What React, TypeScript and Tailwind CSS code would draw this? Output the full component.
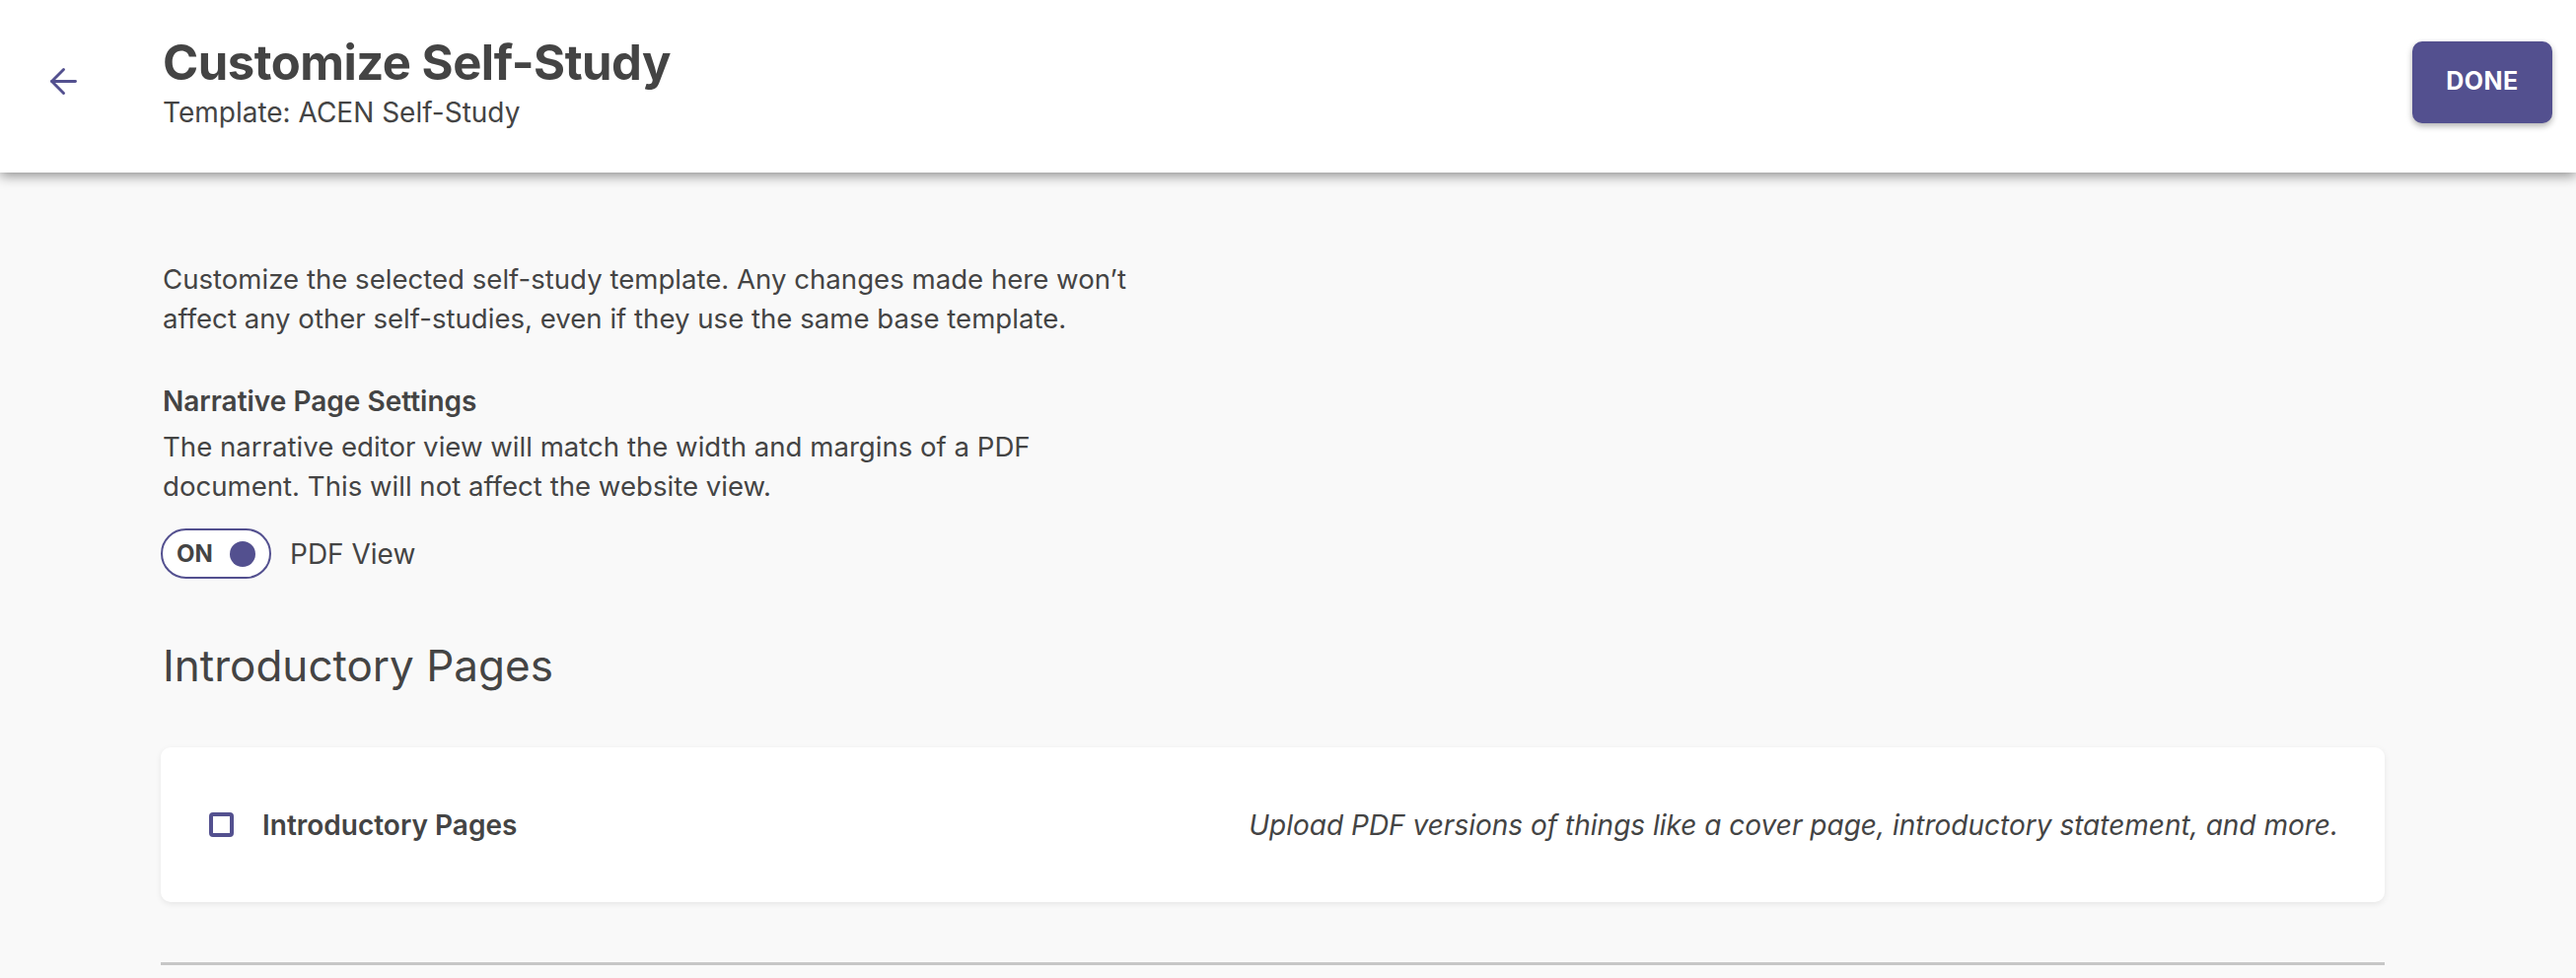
import React, { useState } from 'react'
import { ArrowLeft } from 'lucide-react'

function Toggle({ on, onChange }: { on: boolean; onChange: (v: boolean) => void }) {
  return (
    <button
      onClick={() => onChange(!on)}
      className="flex items-center justify-between w-[112px] h-[51px] rounded-full border-[2.5px] border-[#53508f] bg-white pl-[14px] pr-[14px]"
    >
      <span className="text-[24px] font-bold text-[#444]">{on ? 'ON' : 'OFF'}</span>
      <span className="w-[26px] h-[26px] rounded-full bg-[#53508f]" />
    </button>
  )
}

export default function App() {
  const [pdfView, setPdfView] = useState(true)
  const [intro, setIntro] = useState(false)

  return (
    <div className="min-h-screen bg-[#f9f9f9] font-['Inter','Liberation_Sans',sans-serif] text-[#444]">
      <header className="relative z-10 flex items-center h-[175px] bg-white shadow-[0_3px_12px_rgba(0,0,0,0.45)]">
        <button className="w-[165px] flex justify-start pl-[44px] -mt-[10px] text-[#53508f]">
          <ArrowLeft size={41} strokeWidth={1.7} />
        </button>
        <div className="flex flex-col -mt-[8px]">
          <h1 className="text-[49px] leading-[60px] font-bold tracking-[-0.5px] text-[#444]">
            Customize Self-Study
          </h1>
          <div className="text-[28px] leading-[40px] text-[#444]">Template: ACEN Self-Study</div>
        </div>
        <div className="ml-auto pr-[24px] -mt-[9px]">
          <button className="w-[142px] h-[83px] rounded-[10px] bg-[#53508f] text-white text-[25px] font-bold tracking-[0.5px] shadow-[0_3px_6px_rgba(0,0,0,0.3)]">
            DONE
          </button>
        </div>
      </header>

      <main className="pl-[163px] pr-[194px] pt-[88px] pb-[40px]">
        <p className="pl-[2px] text-[27.6px] leading-[40px]">
          Customize the selected self-study template. Any changes made here won’t
          <br />
          affect any other self-studies, even if they use the same base template.
        </p>

        <h3 className="mt-[44px] pl-[2px] text-[28px] leading-[40px] font-semibold">
          Narrative Page Settings
        </h3>
        <p className="mt-[6px] pl-[2px] text-[27.6px] leading-[40px]">
          The narrative editor view will match the width and margins of a PDF
          <br />
          document. This will not affect the website view.
        </p>

        <div className="mt-[23px] flex items-center gap-[19px]">
          <Toggle on={pdfView} onChange={setPdfView} />
          <span className="text-[28px]">PDF View</span>
        </div>

        <h2 className="mt-[62px] pl-[2px] text-[44px] leading-[52px] font-normal">Introductory Pages</h2>

        <div className="mt-[57px] flex items-center justify-between h-[157px] rounded-[10px] bg-white pl-[49px] pr-[47px] shadow-[0_2px_6px_rgba(0,0,0,0.08)]">
          <label className="flex items-center gap-[29px] cursor-pointer">
            <span
              onClick={() => setIntro(!intro)}
              className={`w-[25px] h-[25px] rounded-[4px] border-[4px] border-[#53508f] ${intro ? 'bg-[#53508f]' : 'bg-white'}`}
            />
            <span className="text-[28px] font-semibold">Introductory Pages</span>
          </label>
          <span className="text-[28px] italic">
            Upload PDF versions of things like a cover page, introductory statement, and more.
          </span>
        </div>

        <div className="mt-[61px] h-[3px] bg-[#c6c6c6]" />
      </main>
    </div>
  )
}
